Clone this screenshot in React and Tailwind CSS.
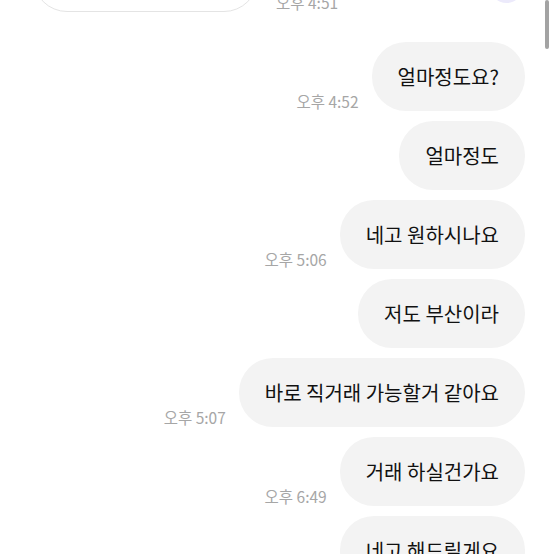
import React from "react";

const FONT = {
  fontFamily: '"Noto Sans CJK KR", "Noto Sans", sans-serif',
};

const messages = [
  { text: "얼마정도요?", time: "오후 4:52" },
  { text: "얼마정도" },
  { text: "네고 원하시나요", time: "오후 5:06" },
  { text: "저도 부산이라" },
  { text: "바로 직거래 가능할거 같아요", time: "오후 5:07" },
  { text: "거래 하실건가요", time: "오후 6:49" },
  { text: "네고 해드릴게요" },
];

const SentRow = ({ text, time }) => (
  <div className="flex justify-end items-end gap-[13px]">
    {time && (
      <span className="text-[15.5px] leading-5 text-[#a6a6a6] whitespace-nowrap">
        {time}
      </span>
    )}
    <div className="h-[69px] flex items-center px-[26px] rounded-[34px] bg-[#f3f3f3] text-[20px] text-[#111111] whitespace-nowrap">
      {text}
    </div>
  </div>
);

const App = () => {
  return (
    <div
      className="relative w-[554px] h-[554px] overflow-hidden bg-white"
      style={FONT}
    >
      {/* top right avatar edge */}
      <div className="absolute left-[490px] top-[-30px] w-[33px] h-[33px] rounded-full bg-[#eceafb]" />

      <div className="flex flex-col gap-[10px] pl-[33px] pr-[29px] -mt-[57px]">
        {/* received message, cut off at the top */}
        <div className="flex items-end gap-[18px] mb-[20px]">
          <div className="h-[69px] w-[225px] rounded-[34px] border border-[#e4e4e4] bg-white" />
          <span className="text-[15.5px] leading-5 text-[#a6a6a6] whitespace-nowrap">
            오후 4:51
          </span>
        </div>

        {messages.map((m, i) => (
          <SentRow key={i} text={m.text} time={m.time} />
        ))}
      </div>

      {/* scrollbar */}
      <div className="absolute right-[5px] top-0 w-[4px] h-[49px] rounded-full bg-[#a3a3a3]" />
    </div>
  );
};

export default App;
